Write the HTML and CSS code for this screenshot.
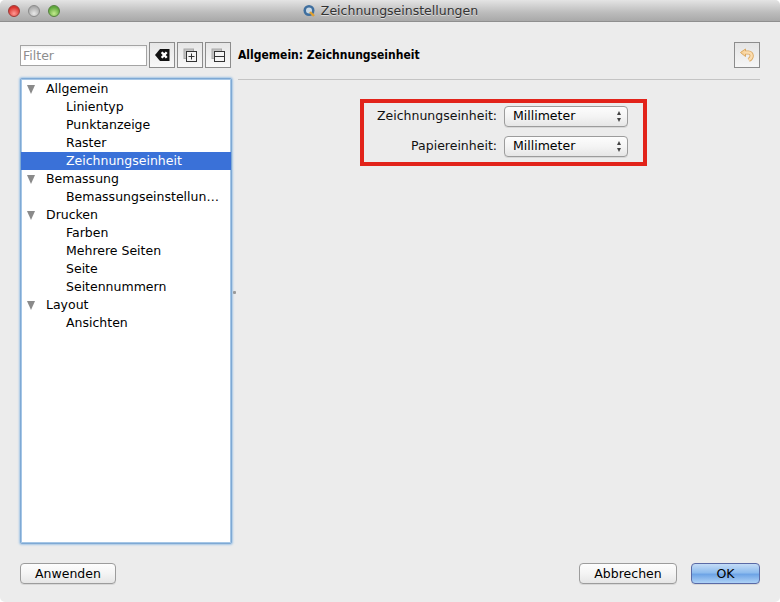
FILE: index.html
```html
<!DOCTYPE html>
<html lang="de">
<head>
<meta charset="utf-8">
<title>Zeichnungseinstellungen</title>
<link rel="stylesheet" href="styles.css">
</head>
<body>
<div class="window">
  <header class="titlebar">
    <div class="lights">
      <span class="light red"></span><span class="light grey"></span><span class="light green"></span>
    </div>
    <div class="title">
      <svg class="appicon" width="14" height="14" viewBox="0 0 14 14"><circle cx="7" cy="6.500" r="5.500" fill="#3f6f9f"/><circle cx="7" cy="6.500" r="3" fill="#c9d8e4"/><path d="M8 8l4 4" stroke="#e0a030" stroke-width="2.400"/></svg>
      <span>Zeichnungseinstellungen</span>
    </div>
  </header>
  <main class="content">
    <div class="panes">
      <aside class="left">
        <div class="filterbar">
          <input class="filter" type="text" placeholder="Filter">
          <button class="tool"><svg width="15" height="14" viewBox="0 0 15 14"><path d="M5 1h9.500v12H5L0 7z" fill="#111"/><path d="M6.700 4.200l5 5.600M11.700 4.200l-5 5.600" stroke="#fff" stroke-width="2.400"/></svg></button>
          <button class="tool"><svg width="14" height="14" viewBox="0 0 14 14" fill="none" stroke="#333"><rect x="1" y="1" width="9.500" height="9.500" fill="#c4c4c4" stroke="#a8a8a8"/><rect x="3.500" y="3.500" width="10" height="10" fill="#f4f4f4"/><path d="M8.500 5.500v6M5.500 8.500h6"/></svg></button>
          <button class="tool"><svg width="14" height="14" viewBox="0 0 14 14" fill="none" stroke="#333"><rect x="1" y="1" width="9.500" height="9.500" fill="#c4c4c4" stroke="#a8a8a8"/><rect x="3.500" y="3.500" width="10" height="10" fill="#f4f4f4"/><path d="M4 8.500h9"/></svg></button>
        </div>
        <ul class="tree">
          <li class="row top">Allgemein</li>
          <li class="row">Linientyp</li>
          <li class="row">Punktanzeige</li>
          <li class="row">Raster</li>
          <li class="row selected">Zeichnungseinheit</li>
          <li class="row top">Bemassung</li>
          <li class="row">Bemassungseinstellun…</li>
          <li class="row top">Drucken</li>
          <li class="row">Farben</li>
          <li class="row">Mehrere Seiten</li>
          <li class="row">Seite</li>
          <li class="row">Seitennummern</li>
          <li class="row top">Layout</li>
          <li class="row">Ansichten</li>
        </ul>
      </aside>
      <span class="handle"></span>
      <section class="right">
        <div class="pagehead">
          <h1>Allgemein: Zeichnungseinheit</h1>
          <button class="tool reset"><svg width="14" height="14" viewBox="0 0 14 14" fill="none"><path d="M4 4.500h4.500a3.200 3.200 0 0 1 3.200 3.200c0 1.900-1.200 3.300-3 4.300" stroke="#dba862" stroke-width="4.200"/><path d="M.5 4.500L5.500 1v7.500z" fill="#f8d39b" stroke="#dba862" stroke-linejoin="round"/><path d="M4.500 4.500h4a3.200 3.200 0 0 1 3.200 3.200c0 1.900-1.200 3.300-3 4.300" stroke="#fbdcae" stroke-width="2.400"/></svg></button>
        </div>
        <div class="formwrap">
          <div class="form">
            <label>Zeichnungseinheit:</label>
            <div class="select"><span>Millimeter</span><span class="updown"><i class="up"></i><i class="down"></i></span></div>
            <label>Papiereinheit:</label>
            <div class="select"><span>Millimeter</span><span class="updown"><i class="up"></i><i class="down"></i></span></div>
          </div>
        </div>
      </section>
    </div>
    <footer class="actions">
      <button class="btn apply">Anwenden</button>
      <button class="btn cancel">Abbrechen</button>
      <button class="btn ok">OK</button>
    </footer>
  </main>
</div>
</body>
</html>
```
FILE: styles.css
```css
* { box-sizing: border-box; }
html, body { margin: 0; padding: 0; background: #fff; }
body { width: 780px; height: 602px; font-family: "DejaVu Sans", sans-serif; font-size: 12.5px; color: #000; overflow: hidden; }
.window { width: 780px; height: 602px; display: flex; flex-direction: column; background: #ececec; border-radius: 5px; overflow: hidden; }
.titlebar { height: 22px; flex: none; position: relative; display: flex; align-items: center; justify-content: center; background: linear-gradient(#e4e4e4, #bcbcbc 60%, #a9a9a9); border-bottom: 1px solid #8f8f8f; }
.lights { position: absolute; left: 8px; top: 5px; display: flex; gap: 8px; }
.light { width: 12px; height: 12px; border-radius: 50%; border: 1px solid #777; }
.red { background: radial-gradient(circle at 50% 75%, #ff9a94, #d8322c 70%); border-color: #9c3a36; }
.grey { background: radial-gradient(circle at 50% 75%, #e8e8e8, #a8a8a8 75%); border-color: #8a8a8a; }
.green { background: radial-gradient(circle at 50% 75%, #c4ea8e, #5fa83c 70%); border-color: #55803e; }
.title { display: flex; align-items: center; gap: 5px; color: #333; font-size: 12.5px; text-shadow: 0 1px 0 #ddd; }
.appicon { display: block; }
.content { flex: 1; display: flex; flex-direction: column; padding: 20px 20px 18px; }
.panes { flex: 1; display: flex; gap: 6px; position: relative; min-height: 0; }
.left { width: 212px; flex: none; display: flex; flex-direction: column; }
.filterbar { display: flex; align-items: center; height: 26px; margin-bottom: 10px; }
.filter { width: 127px; height: 21px; margin-right: 2px; padding: 0 2px; border: 1px solid #a4a4a4; background: linear-gradient(#f0f0f0, #fff 4px); font: inherit; color: #000; outline: 0; border-radius: 0; }
.filter::placeholder { color: #8e8e8e; opacity: 1; }
.tool { width: 26px; height: 26px; padding: 0; border: 1px solid #8c8c8c; background: linear-gradient(#e6e6e6, #f8f8f8); display: flex; align-items: center; justify-content: center; border-radius: 0; }
.tool + .tool { margin-left: 2px; }
.tree { flex: 1; list-style: none; margin: 0; padding: 1px 0 0; background: #fff; border: 1px solid #7fa9d4; border-radius: 2px; box-shadow: 0 0 0 1px #a5c6e6 inset, 0 0 2px 1px #a5c6e6; }
.row { height: 18px; line-height: 18px; padding-left: 45px; white-space: nowrap; position: relative; }
.row.top { padding-left: 25px; }
.row.top::before { content: ""; position: absolute; left: 6px; top: 5px; border-left: 4.500px solid transparent; border-right: 4.500px solid transparent; border-top: 9px solid #8a8a8a; }
.row.selected { background: #3a71d8; color: #fff; }
.handle { position: absolute; left: 213px; top: 249px; width: 3px; height: 3px; background: #9a9a9a; border-radius: 1px; }
.right { flex: 1; min-width: 0; display: flex; flex-direction: column; }
.pagehead { height: 38px; flex: none; display: flex; align-items: flex-start; justify-content: space-between; border-bottom: 1px solid #c4c4c4; }
.pagehead h1 { margin: 0; font-size: 12px; font-stretch: condensed; line-height: 26px; font-weight: 700; }
.reset { background: linear-gradient(#e4e4e4, #f6f6f6); }
.formwrap { display: flex; padding: 19px 0 0 122px; }
.form { display: grid; grid-template-columns: 133px 124px; column-gap: 7px; row-gap: 9px; align-content: start; align-items: center; width: 287px; height: 67px; padding: 3px 0 0; border: 4px solid #e2231a; }
.form label { text-align: right; color: #111; padding-bottom: 2px; }
.select { height: 21px; border: 1px solid #9c9c9c; border-radius: 4px; background: linear-gradient(#fdfdfd, #f4f4f4 50%, #e6e6e6); padding: 0 8px 2px; display: flex; align-items: center; justify-content: space-between; line-height: 17px; box-shadow: 0 1px 0 #d8d8d8; }
.updown { display: flex; flex-direction: column; gap: 3px; margin: 2px -2px 0 0; }
.updown i { display: block; border-left: 2.500px solid transparent; border-right: 2.500px solid transparent; }
.updown .up { border-bottom: 4px solid #444; }
.updown .down { border-top: 4px solid #444; }
.actions { flex: none; display: flex; margin-top: 19px; }
.btn { height: 21px; padding: 0; font: inherit; color: #000; border: 1px solid #9c9c9c; border-radius: 4px; background: linear-gradient(#fdfdfd, #f4f4f4 50%, #e6e6e6); box-shadow: 0 1px 0 #d8d8d8; line-height: 18px; }
.apply { width: 96px; }
.cancel { width: 98px; margin-left: auto; }
.ok { width: 69px; margin-left: 14px; border-color: #5a6aa6; background: linear-gradient(#c4dcf6, #8ebcee 45%, #6ea4e6 55%, #aed2f6); }
```
